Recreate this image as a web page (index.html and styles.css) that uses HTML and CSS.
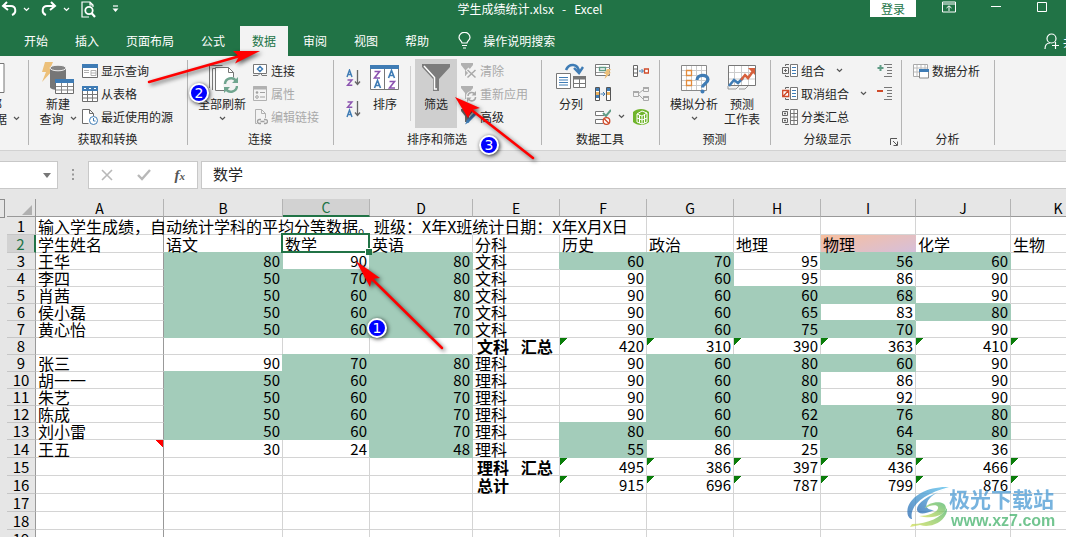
FILE: index.html
```html
<!DOCTYPE html>
<html lang="zh-CN">
<head>
<meta charset="utf-8">
<meta name="viewport" content="width=device-width, initial-scale=1">
<title>学生成绩统计.xlsx - Excel</title>
<link rel="stylesheet" href="styles.css">
</head>
<body>
<svg class="defs" aria-hidden="true">
  <symbol id="chev" viewBox="0 0 7 5"><path d="M1 1l2.500 2.500L6 1" fill="none" stroke="currentColor" stroke-width="1.200"/></symbol>
</svg>

<header class="top">
  <div class="titlebar">
    <div class="quick">
      <button class="qbtn" aria-label="撤消"><svg width="16" height="16" viewBox="0 0 16 16"><path d="M6 1L2 5l5 4M2 5h8c5 0 6 7 1 9" fill="none" stroke="#fff" stroke-width="2"/></svg></button>
      <button class="qbtn" aria-label="撤消列表"><svg width="7" height="5"><use href="#chev"/></svg></button>
      <button class="qbtn redo" aria-label="恢复"><svg width="16" height="16" viewBox="0 0 16 16"><path d="M10 1l4 4-5 4M14 5H6C1 5 0 12 5 14" fill="none" stroke="#fff" stroke-width="2"/></svg></button>
      <button class="qbtn" aria-label="恢复列表"><svg width="7" height="5"><use href="#chev"/></svg></button>
      <button class="qbtn preview" aria-label="打印预览"><svg width="16" height="17" viewBox="0 0 16 17"><path d="M12 6V4L9 1H1v15h7M9 1v3h3" fill="none" stroke="#fff" stroke-width="1.200"/><circle cx="8" cy="9.500" r="3.700" fill="none" stroke="#fff" stroke-width="1.800"/><path d="M10.500 12l3.500 4" stroke="#fff" stroke-width="2.200"/></svg></button>
      <button class="qbtn" aria-label="自定义快速访问工具栏"><svg width="7" height="8" viewBox="0 0 7 8"><path d="M1 1h5" stroke="#fff" stroke-width="1.200"/><path d="M0.500 3.500h6l-3 3.500z" fill="#fff"/></svg></button>
    </div>
    <h1 class="title">学生成绩统计.xlsx&nbsp;&nbsp; -&nbsp;&nbsp; Excel</h1>
    <div class="winctl">
      <button class="login">登录</button>
      <button class="wbtn" aria-label="功能区显示选项"><svg width="14" height="12" viewBox="0 0 14 12"><path d="M.5 1h13v10H.5zM.5 3h13M7 10V5M4.500 7L7 4.800 9.500 7" fill="none" stroke="#fff"/></svg></button>
      <button class="wbtn" aria-label="最小化"><svg width="11" height="12"><path d="M0 5.500h10" stroke="#fff"/></svg></button>
      <button class="wbtn" aria-label="最大化"><svg width="11" height="12"><path d="M.5 1.500h9v9h-9z" fill="none" stroke="#fff"/></svg></button>
    </div>
  </div>
  <nav class="tabs">
    <button class="tab">开始</button><button class="tab">插入</button><button class="tab">页面布局</button><button class="tab">公式</button><button class="tab active">数据</button><button class="tab">审阅</button><button class="tab">视图</button><button class="tab">帮助</button>
    <button class="tell"><svg width="13" height="17" viewBox="0 0 13 17"><path d="M4 11C4 9 1 8 1 5.500a5.300 5 0 0 1 11 0C12 8 9 9 9 11zM4 13.500h5M5 16h3" fill="none" stroke="#fff" stroke-width="1.200"/></svg>操作说明搜索</button>
    <button class="share"><svg width="16" height="17" viewBox="0 0 16 17"><circle cx="7.500" cy="5.500" r="4.500" fill="none" stroke="#fff" stroke-width="1.200"/><path d="M1 16c0-4 2-6 5-6M8 12.500h7M11.500 9v7" fill="none" stroke="#fff" stroke-width="1.200"/></svg>共享</button>
  </nav>
</header>

<section class="ribbon">
  <div class="group g-ext">
    <div class="body">
      <button class="big"><svg width="32" height="32" viewBox="0 0 32 32"><path d="M2 1.500h29v29H2z" fill="#fff" stroke="#777"/></svg><span>获取外部</span><span>数据<svg class="dd" width="7" height="5"><use href="#chev"/></svg></span></button>
    </div>
  </div>

  <div class="group g-get">
    <div class="body">
      <button class="big">
        <svg width="34" height="32" viewBox="0 0 34 32"><path d="M4 0h8L9 7h4L1 20l4-10H1z" fill="#ecc07a"/><path d="M9 6v19c0 4 16 4 16 0V6z" fill="#767676"/><ellipse cx="17" cy="6" rx="8" ry="2.800" fill="#858585" stroke="#f3f3f3"/><path d="M14.500 17.500h18v14h-18z" fill="#fff" stroke="#6d6d6d"/><path d="M14 17h19v4H14z" fill="#3f7cb5"/><path d="M20.500 21v10M26.500 21v10M15 24.500h17M15 28h17" stroke="#858585"/></svg>
        <span>新建</span><span>查询<svg class="dd" width="7" height="5"><use href="#chev"/></svg></span>
      </button>
      <div class="stack">
        <button class="small"><svg width="16" height="16" viewBox="0 0 16 16"><path d="M.5 1.500h15v13H.5z" fill="#fff" stroke="#6d6d6d"/><path d="M0 1h16v4H0z" fill="#3f7cb5"/><path d="M2 7.500h5M2 9.500h5M9 7.500h5v5H9zM9 10h5" stroke="#b1b1b1" fill="none"/></svg>显示查询</button>
        <button class="small"><svg width="16" height="16" viewBox="0 0 16 16"><path d="M.5.5h15v15H.5z" fill="#fff" stroke="#6d6d6d"/><path d="M0 0h16v5H0z" fill="#3f7cb5"/><path d="M2 2.500h2M7 2.500h2M12 2.500h2" stroke="#fff"/><path d="M5.500 5v10M10.500 5v10M1 8.500h14M1 12h14" stroke="#777"/></svg>从表格</button>
        <button class="small"><svg width="16" height="16" viewBox="0 0 16 16"><path d="M6.500 14.500h-6V.5h7l4 4V7M7.500.5v4h4" fill="#fff" stroke="#6d6d6d"/><circle cx="11.500" cy="11.500" r="4" fill="#fff" stroke="#3f7cb5"/><path d="M11.500 9v3h2" fill="none" stroke="#3f7cb5"/></svg>最近使用的源</button>
      </div>
    </div>
    <div class="label">获取和转换</div>
  </div>

  <div class="group g-conn">
    <div class="body">
      <button class="big">
        <svg width="32" height="32" viewBox="0 0 32 32"><path d="M3.500 26V3.500h13M6.500 28V6.500h12" fill="none" stroke="#777"/><path d="M9.500 5.500h13l5 5v18h-18z" fill="#fff" stroke="#777"/><path d="M22.500 5.500v5h5" fill="none" stroke="#777"/><circle cx="25" cy="23" r="8" fill="#f3f3f3"/><path d="M19 22a6 6 0 0 1 11-3M31 24a6 6 0 0 1-11 3" fill="none" stroke="#70a58f" stroke-width="2.400"/><path d="M32 15v6h-6zM18 31v-6h6z" fill="#70a58f"/></svg>
        <span>全部刷新</span><svg class="below" width="7" height="5"><use href="#chev"/></svg>
      </button>
      <div class="stack">
        <button class="small"><svg width="16" height="16" viewBox="0 0 16 16"><path d="M1.500 1.500h13v9h-13z" fill="#fff" stroke="#777"/><path d="M8 3.500L10.500 6 8 8.500 5.500 6z" fill="none" stroke="#3f7cb5" stroke-width="1.500"/><path d="M1 12.500h5l2-2M15 12.500h-5l-1-2" fill="none" stroke="#777"/></svg>连接</button>
        <button class="small" disabled><svg width="16" height="16" viewBox="0 0 16 16"><path d="M1.500.5h13v14h-13z" fill="none" stroke="#b1b1b1"/><path d="M1 2h14" stroke="#b1b1b1" stroke-width="3"/><path d="M8 6.500h5M8 11h5" stroke="#a1a1a1"/><circle cx="5" cy="6.500" r="1.300" fill="#a1a1a1"/><circle cx="5" cy="11" r="1.300" fill="none" stroke="#a1a1a1"/></svg>属性</button>
        <button class="small" disabled><svg width="16" height="16" viewBox="0 0 16 16"><path d="M5 14.500H3.500V.5h6l4 4V9M9.500.5v4h4" fill="none" stroke="#b1b1b1"/><path d="M9 10.500H7.500a2 2 0 0 0 0 4H9M12 10.500h1.500a2 2 0 0 1 0 4H12M8.500 12.500h4" fill="none" stroke="#a1a1a1" stroke-width="1.300"/></svg>编辑链接</button>
      </div>
    </div>
    <div class="label">连接</div>
  </div>

  <div class="group g-sort">
    <div class="body">
      <div class="sorts">
        <button class="sortbtn" aria-label="升序"><svg width="16" height="18" viewBox="0 0 16 18"><path d="M1 8l2.500-7L6 8M2 5.500h3" fill="none" stroke="#3f7cb5" stroke-width="1.400"/><path d="M1.500 11H6l-4.500 5.300H6.300" fill="none" stroke="#8c54b0" stroke-width="1.400"/><path d="M11.500 1v14M9 12.500l2.500 3 2.500-3" fill="none" stroke="#666" stroke-width="1.300"/></svg></button>
        <button class="sortbtn" aria-label="降序"><svg width="16" height="18" viewBox="0 0 16 18"><path d="M1.500 2H6L1.500 7.300H6.300" fill="none" stroke="#8c54b0" stroke-width="1.400"/><path d="M1 17l2.500-7L6 17M2 14.500h3" fill="none" stroke="#3f7cb5" stroke-width="1.400"/><path d="M11.500 1v14M9 12.500l2.500 3 2.500-3" fill="none" stroke="#666" stroke-width="1.300"/></svg></button>
      </div>
      <button class="big sort">
        <svg width="30" height="32" viewBox="0 0 30 32"><path d="M.5 3.500h28v24H.5z" fill="#fff" stroke="#777"/><path d="M0 3h29v4H0z" fill="#3f7cb5"/><path d="M14.500 7v20" stroke="#777"/><path d="M4.500 9.500h5l-5 6.500h5.500M19.500 19.500h5l-5 6.500h5.500" fill="none" stroke="#8c54b0" stroke-width="1.600"/><path d="M4.500 26l3-7.500 3 7.500M5.500 23.500h4M18.500 16l3-7.500 3 7.500M19.500 13.500h4" fill="none" stroke="#3f7cb5" stroke-width="1.600"/></svg>
        <span>排序</span>
      </button>
      <div class="vline"></div>
      <button class="big pressed">
        <svg width="28" height="32" viewBox="0 0 28 32"><path d="M0 2h28v3L17 17v12h-6V17L0 5z" fill="#7c7c7c"/><path d="M2 4l10.500 11.500V27H15" fill="none" stroke="#fff" stroke-width="1.500"/></svg>
        <span>筛选</span>
      </button>
      <div class="stack">
        <button class="small" disabled><svg width="16" height="16" viewBox="0 0 16 16"><path d="M0 0h12v2L8 7v6H4V7L0 2z" fill="#b1b1b1"/><path d="M6 6l8 8M14 6l-8 8" stroke="#f3f3f3" stroke-width="4"/><path d="M6.500 7l8 7.500M14.500 7l-8 7.500" stroke="#a9a9a9" stroke-width="1.500"/></svg>清除</button>
        <button class="small" disabled><svg width="16" height="16" viewBox="0 0 16 16"><path d="M0 0h12v2L8 7v6H4V7L0 2z" fill="#b1b1b1"/><circle cx="10.500" cy="10.500" r="5.500" fill="#f3f3f3"/><path d="M7 10a3.700 3.700 0 0 1 7-1.500M14.500 11a3.700 3.700 0 0 1-7 1.800" fill="none" stroke="#a9a9a9" stroke-width="1.500"/><path d="M15 5v4.500h-4.500zM6 16v-4.500h4.500z" fill="#a9a9a9"/></svg>重新应用</button>
        <button class="small"><svg width="16" height="16" viewBox="0 0 16 16"><path d="M0 0h12v2L8 7v6H4V7L0 2z" fill="#666"/><path d="M15 4l-9 9" stroke="#3f7cb5" stroke-width="3"/><path d="M6.500 10.500L4 15.500l4.500-2.500z" fill="#3f7cb5"/></svg>高级</button>
      </div>
    </div>
    <div class="label">排序和筛选</div>
  </div>

  <div class="group g-tools">
    <div class="body">
      <button class="big">
        <svg width="32" height="32" viewBox="0 0 32 32"><path d="M11 8c3-7 12-7 13 2" fill="none" stroke="#3f7cb5" stroke-width="2.600"/><path d="M19 6l5 5 4-6" fill="none" stroke="#3f7cb5" stroke-width="2.400"/><path d="M1.500 11.500h14v15h-14z" fill="#fff" stroke="#777"/><path d="M4 15.500h9M4 18h9M4 20.500h9M4 23h9" stroke="#3f7cb5"/><path d="M18.500 14.500h12v11h-12z" fill="#fff" stroke="#777"/><path d="M18 14h13v3.500H18z" fill="#777"/><path d="M24.500 17v8M19 21.500h11" stroke="#777"/></svg>
        <span>分列</span>
      </button>
      <div class="toolgrid">
        <button class="ic" aria-label="快速填充"><svg width="16" height="16" viewBox="0 0 16 16"><path d="M.5 1.500h14v11H.5z" fill="#fff" stroke="#777"/><path d="M1 4.500h14M1 9.500h14" stroke="#999"/><path d="M4.500 4.500h6v3h-6z" fill="#fff" stroke="#5f9c85" stroke-width="1.300"/><path d="M12 6h4l-2 3.500h2L9.500 16l1.500-5H9z" fill="#ecc07a"/></svg></button>
        <button class="ic" aria-label="合并计算"><svg width="16" height="16" viewBox="0 0 16 16"><path d="M.5 2.500h4v11h-4zM.5 6h4M.5 10h4" fill="#fff" stroke="#666"/><path d="M6 8h4M8.500 6l2 2-2 2" fill="none" stroke="#3f7cb5"/><path d="M11.500 6h4v4h-4z" fill="#fff" stroke="#cf4b2a" stroke-width="1.300"/></svg></button>
        <button class="ic" aria-label="删除重复值"><svg width="16" height="16" viewBox="0 0 16 16"><path d="M.5 1.500h4v13h-4zM11.500 1.500h4v13h-4z" fill="#fff" stroke="#555"/><path d="M1 2h3v3H1zM1 9h3v3H1zM12 2h3v3h-3z" fill="#3f7cb5"/><path d="M1 6h3v3H1zM12 6h3v3h-3z" fill="#ecb25e"/><path d="M5.500 8h4M8 6l2 2-2 2" fill="none" stroke="#3f7cb5"/></svg></button>
        <button class="ic" aria-label="关系" disabled><svg width="16" height="16" viewBox="0 0 16 16"><path d="M5 8l5-4M5 8l5 5" stroke="#aaa"/><path d="M.5 5.500h5v5h-5zM10.500 1.500h5v4h-5zM10.500 10.500h5v4h-5z" fill="#f3f3f3" stroke="#aaa"/><path d="M0 6h6M10 2h6M10 11h6" stroke="#aaa" stroke-width="2"/></svg></button>
        <button class="ic wide" aria-label="数据验证"><svg width="16" height="16" viewBox="0 0 16 16"><path d="M9 2.500H.5v4H9M8 10.500H.5v4H8" fill="#fff" stroke="#777"/><path d="M8 4l3 3 5-6" fill="none" stroke="#5f9c85" stroke-width="2"/><circle cx="11.500" cy="12" r="3.300" fill="#fff" stroke="#cf4b2a" stroke-width="1.300"/><path d="M9.200 9.700l4.600 4.600" stroke="#cf4b2a" stroke-width="1.300"/></svg><svg width="7" height="5"><use href="#chev"/></svg></button>
        <button class="ic" aria-label="管理数据模型"><svg width="16" height="16" viewBox="0 0 16 16"><path d="M0 3C4-1 12-1 16 3v10c-4 4-12 4-16 0z" fill="#70b52b"/><path d="M4 5l5-3 5 2v9l-5 2-5-2zM4 5l5 2 5-3M9 7v8M6.500 6v8M11.500 5.500V14M4 9l5 2 5-2" fill="none" stroke="#fff"/></svg></button>
      </div>
    </div>
    <div class="label">数据工具</div>
  </div>

  <div class="group g-fore">
    <div class="body">
      <button class="big">
        <svg width="32" height="32" viewBox="0 0 32 32"><path d="M3.500 3.500h25v25h-25z" fill="#fff" stroke="#888"/><path d="M8.500 4v24M13.500 4v24M18.500 4v24M23.500 4v24M4 8.500h24M4 13.500h24M4 18.500h24M4 23.500h24" stroke="#ccc"/><path d="M8.500 8.500h5v5h-5zM8.500 18.500h5v5h-5z" fill="#fff" stroke="#e38b3b" stroke-width="1.300"/><path d="M19 18c0-6 11-6 11-.5 0 4-5.500 4-5.500 8" fill="none" stroke="#3f7cb5" stroke-width="3.200"/><circle cx="24.500" cy="29.500" r="2" fill="#3f7cb5"/></svg>
        <span>模拟分析</span><svg class="below" width="7" height="5"><use href="#chev"/></svg>
      </button>
      <button class="big">
        <svg width="32" height="32" viewBox="0 0 32 32"><path d="M2.500 3.500h27v20h-27z" fill="#fff" stroke="#777"/><path d="M8.500 4v19M15.500 4v19M22.500 4v19M3 10.500h26M3 17h26" stroke="#ccc"/><path d="M3 24l5-6 4 3 5-5" fill="none" stroke="#3f7cb5" stroke-width="2.500"/><path d="M15 18l4-5 3 3 6-8" fill="none" stroke="#d6603c" stroke-width="2.500"/><path d="M22 6h7v7z" fill="#d6603c"/><path d="M2 24v3h8l3-3M13 27h6l3-3" fill="none" stroke="#999"/></svg>
        <span>预测</span><span>工作表</span>
      </button>
    </div>
    <div class="label">预测</div>
  </div>

  <div class="group g-outline">
    <div class="body">
      <div class="stack">
        <button class="small"><svg width="16" height="16" viewBox="0 0 16 16"><path d="M8.500 1.500h7v12h-7z" fill="#fff" stroke="#777"/><path d="M10 4.500h4M10 7.500h4M10 10.500h4" stroke="#3f7cb5"/><path d="M7 1.500H3.500V3M7 13.500H3.500V12M.5 4.500h6v6h-6zM2 7.500h3M3.500 6v3" fill="none" stroke="#666"/></svg>组合<svg class="dd far" width="7" height="5"><use href="#chev"/></svg></button>
        <button class="small"><svg width="16" height="16" viewBox="0 0 16 16"><path d="M8.500 1.500h7v12h-7z" fill="#fff" stroke="#777"/><path d="M10 4.500h4M10 7.500h4M10 10.500h4" stroke="#3f7cb5"/><path d="M7 1.500H3.500V3M7 13.500H3.500V12" fill="none" stroke="#666"/><path d="M.7 4.500h6v6h-6zM1 10.500l5.500-6" fill="#fff" stroke="#cf4b2a" stroke-width="1.300"/></svg>取消组合<svg class="dd far" width="7" height="5"><use href="#chev"/></svg></button>
        <button class="small"><svg width="16" height="16" viewBox="0 0 16 16"><path d="M8.500.5h7v15h-7zM8 4.500h8M8 8h8M8 11.500h8M12 0v16" fill="#fff" stroke="#777"/><path d="M7 .5H3M.5 2.500h5v4h-5zM2 4.500h2M3 3.500v2M.5 9.500h5v4h-5zM2 11.500h2M3 10.500v2M3 15.500h4" fill="none" stroke="#666"/></svg>分类汇总</button>
      </div>
      <div class="detail">
        <button class="ic" aria-label="显示明细数据"><svg width="16" height="16" viewBox="0 0 16 16"><path d="M3.500 2v6M.5 5h6" stroke="#5f9c85" stroke-width="2"/><path d="M7 1.500h8M10 4.500h5M10 7.500h5M10 10.500h5M7 13.500h8" stroke="#777"/></svg></button>
        <button class="ic" aria-label="隐藏明细数据"><svg width="16" height="16" viewBox="0 0 16 16"><path d="M0 5h6" stroke="#cf4b2a" stroke-width="2"/><path d="M7 1.500h8M10 4.500h5M10 7.500h5M10 10.500h5M7 13.500h8" stroke="#777"/></svg></button>
      </div>
    </div>
    <div class="label">分级显示</div>
    <button class="launch" aria-label="分级显示设置"><svg width="8" height="8" viewBox="0 0 8 8"><path d="M.5 7V.5H7M3 3l4 4M7.500 3.500v4h-4" fill="none" stroke="#555"/></svg></button>
  </div>

  <div class="group g-an">
    <div class="body">
      <div class="stack">
        <button class="small"><svg width="16" height="16" viewBox="0 0 16 16"><path d="M.5 1.500h14v12H.5z" fill="#fff" stroke="#aaa"/><path d="M4 2v11M8 2v11M12 2v11M1 5h13M1 9h13" stroke="#bbb"/><path d="M6.500 6.500h9v8.500h-9z" fill="#fff" stroke="#888"/><path d="M6 6h10v3H6z" fill="#3f7cb5"/></svg>数据分析</button>
      </div>
    </div>
    <div class="label">分析</div>
  </div>
</section>

<section class="formulabar">
  <div class="namebox"><input type="text" aria-label="名称框"><button aria-label="名称列表"><svg width="8" height="5"><path d="M0 0h8L4 5z" fill="#777"/></svg></button></div>
  <svg class="dots" width="3" height="12"><path d="M0 1h2M0 5.500h2M0 10h2" stroke="#999" stroke-width="2"/></svg>
  <div class="fxbox">
    <button aria-label="取消"><svg width="12" height="12"><path d="M1 1l10 10M11 1L1 11" stroke="#b8b8b8" stroke-width="1.600"/></svg></button>
    <button aria-label="输入"><svg width="14" height="12"><path d="M1 6l4 4 8-9" fill="none" stroke="#b8b8b8" stroke-width="2.400"/></svg></button>
    <button class="fx" aria-label="插入函数">f<small>x</small></button>
  </div>
  <input class="formula" type="text" value="数学" aria-label="编辑栏">
</section>

<main class="sheet">
  <div class="gutter"></div>
  <table class="grid">
    <colgroup><col class="w-head"><col class="w-a"><col class="w-b"><col class="w-m"><col class="w-d"><col class="w-m"><col class="w-m"><col class="w-m"><col class="w-m"><col class="w-l"><col class="w-l"><col class="w-l"></colgroup>
    <thead><tr><th class="corner"><svg width="10" height="10"><path d="M10 0v10H0z" fill="#b0b0b0"/></svg></th><th>A</th><th>B</th><th class="on">C</th><th>D</th><th>E</th><th>F</th><th>G</th><th>H</th><th>I</th><th>J</th><th>K</th></tr></thead>
    <tbody>
      <tr class="tall spill"><th>1</th><td class="a">输入学生成绩&#xFF0C;自动统计学科的平均分等数据。班级&#xFF1A;X年X班统计日期&#xFF1A;X年X月X日</td><td></td><td></td><td></td><td></td><td></td><td></td><td></td><td></td><td></td><td></td></tr>
      <tr class="tall"><th class="on">2</th><td class="a">学生姓名</td><td>语文</td><td class="sel">数学</td><td>英语</td><td>分科</td><td>历史</td><td>政治</td><td>地理</td><td class="warm">物理</td><td>化学</td><td>生物</td></tr>
      <tr><th>3</th><td class="a">王华</td><td class="n g">80</td><td class="n">90</td><td class="n g">80</td><td>文科</td><td class="n g">60</td><td class="n g">70</td><td class="n">95</td><td class="n g">56</td><td class="n g">60</td><td></td></tr>
      <tr><th>4</th><td class="a">李四</td><td class="n g">50</td><td class="n g">70</td><td class="n g">80</td><td>文科</td><td class="n">90</td><td class="n g">60</td><td class="n">95</td><td class="n">86</td><td class="n">90</td><td></td></tr>
      <tr><th>5</th><td class="a">肖茜</td><td class="n g">50</td><td class="n g">60</td><td class="n g">80</td><td>文科</td><td class="n">90</td><td class="n g">60</td><td class="n g">60</td><td class="n g">68</td><td class="n">90</td><td></td></tr>
      <tr><th>6</th><td class="a">侯小磊</td><td class="n g">50</td><td class="n g">60</td><td class="n g">70</td><td>文科</td><td class="n">90</td><td class="n g">60</td><td class="n g">65</td><td class="n">83</td><td class="n g">80</td><td></td></tr>
      <tr><th>7</th><td class="a">黄心怡</td><td class="n g">50</td><td class="n g">60</td><td class="n g">70</td><td>文科</td><td class="n">90</td><td class="n g">60</td><td class="n g">75</td><td class="n g">70</td><td class="n">90</td><td></td></tr>
      <tr><th>8</th><td class="a"></td><td></td><td></td><td></td><td class="b">文科&ensp; 汇总</td><td class="n f">420</td><td class="n f">310</td><td class="n f">390</td><td class="n f">363</td><td class="n f">410</td><td class="f"></td></tr>
      <tr><th>9</th><td class="a">张三</td><td class="n">90</td><td class="n g">70</td><td class="n g">80</td><td>理科</td><td class="n">90</td><td class="n g">60</td><td class="n g">80</td><td class="n g">60</td><td class="n">90</td><td></td></tr>
      <tr><th>10</th><td class="a">胡一一</td><td class="n g">50</td><td class="n g">60</td><td class="n g">80</td><td>理科</td><td class="n">90</td><td class="n g">60</td><td class="n g">80</td><td class="n">86</td><td class="n">90</td><td></td></tr>
      <tr><th>11</th><td class="a">朱艺</td><td class="n g">50</td><td class="n g">60</td><td class="n g">70</td><td>理科</td><td class="n">90</td><td class="n g">60</td><td class="n g">80</td><td class="n">92</td><td class="n">90</td><td></td></tr>
      <tr><th>12</th><td class="a">陈成</td><td class="n g">50</td><td class="n g">60</td><td class="n g">70</td><td>理科</td><td class="n">90</td><td class="n g">60</td><td class="n g">62</td><td class="n g">76</td><td class="n g">80</td><td></td></tr>
      <tr><th>13</th><td class="a">刘小雷</td><td class="n g">50</td><td class="n g">60</td><td class="n g">70</td><td>理科</td><td class="n g">80</td><td class="n g">60</td><td class="n g">70</td><td class="n g">64</td><td class="n g">80</td><td></td></tr>
      <tr class="tall"><th>14</th><td class="a note">王五</td><td class="n">30</td><td class="n">24</td><td class="n g">48</td><td>理科</td><td class="n g">55</td><td class="n">86</td><td class="n">25</td><td class="n g">58</td><td class="n">36</td><td></td></tr>
      <tr class="tall"><th>15</th><td class="a"></td><td></td><td></td><td></td><td class="b">理科&ensp; 汇总</td><td class="n f">495</td><td class="n f">386</td><td class="n f">397</td><td class="n f">436</td><td class="n f">466</td><td class="f"></td></tr>
      <tr class="tall"><th>16</th><td class="a"></td><td></td><td></td><td></td><td class="b">总计</td><td class="n f">915</td><td class="n f">696</td><td class="n f">787</td><td class="n f">799</td><td class="n f">876</td><td class="f"></td></tr>
      <tr class="tall"><th>17</th><td class="a"></td><td></td><td></td><td></td><td></td><td></td><td></td><td></td><td></td><td></td><td></td></tr>
      <tr class="tall"><th>18</th><td class="a"></td><td></td><td></td><td></td><td></td><td></td><td></td><td></td><td></td><td></td><td></td></tr>
      <tr class="tall"><th>19</th><td class="a"></td><td></td><td></td><td></td><td></td><td></td><td></td><td></td><td></td><td></td><td></td></tr>
    </tbody>
  </table>
</main>

<svg class="marks" width="1066" height="537" viewBox="0 0 1066 537">
  <defs>
    <linearGradient id="swB" x1="0" y1="1" x2="1" y2="0"><stop offset="0" stop-color="#2466b0"/><stop offset="1" stop-color="#58c0ec"/></linearGradient>
    <linearGradient id="swG" x1="0" y1="1" x2="1" y2="0"><stop offset="0" stop-color="#d5df55"/><stop offset="1" stop-color="#4bb56a"/></linearGradient>
  </defs>
  <g class="arrows">
    <path d="M149 82l91-26" stroke="#f00" stroke-width="2.500" stroke-linecap="round"/><path d="M260 51l-27 0 6 5.500-4 7z"/>
    <path d="M442 348l-70-69" stroke="#f00" stroke-width="2.500" stroke-linecap="round"/><path d="M356 261l24 17-8 1-2 8z"/>
    <path d="M533 158l-64-50" stroke="#f00" stroke-width="2.500" stroke-linecap="round"/><path d="M455 97l25 11-8 2-4 8z"/>
  </g>
  <g class="badges">
    <circle cx="199" cy="93" r="9"/><circle cx="489" cy="145" r="9"/><circle cx="377" cy="328" r="9"/>
  </g>
  <g class="nums"><text x="199" y="98">2</text><text x="489" y="150">3</text><text x="377" y="333">1</text></g>
  <g class="brand">
    <path d="M949 487c-20-1-37 8-41 20-2 7 1 12 4 12-3-12 10-25 37-32z" fill="url(#swB)"/>
    <path d="M946 489c-20 7-30 15-29 21 1 5 9 4 17 0-5 0-9-2-7-7 2-6 9-11 19-14z" fill="url(#swB)"/>
    <path d="M919 516c9 0 20-4 19-9-1-3-8-2-13 1 3-6 20-9 21 0 0 6-12 12-27 8z" fill="url(#swG)"/>
    <path d="M912 524c16 0 30-7 35-16 1 12-15 21-27 17l-10 2z" fill="url(#swG)"/>
    <text class="cn" x="949" y="507">极光下载站</text><text class="url" x="951" y="526">www.xz7.com</text>
  </g>
</svg>
</body>
</html>
```

FILE: styles.css
```css
* { box-sizing: border-box; }
html, body { height: 100%; }
body {
  margin: 0;
  position: relative;
  display: flex;
  flex-direction: column;
  overflow: hidden;
  background: #e6e6e6;
  color: #262626;
  font: 12px/15px "Noto Sans CJK SC", sans-serif;
}
button { border: 0; padding: 0; background: none; color: inherit; font: inherit; white-space: nowrap; }
input { border: 0; padding: 0; min-width: 0; font: inherit; color: inherit; background: none; }
svg { display: block; flex: none; }
.defs { position: absolute; width: 0; height: 0; }

/* title bar and tabs */
.top { background: #217346; color: #fff; }
.titlebar { display: grid; grid-template-columns: 1fr auto 1fr; height: 26px; align-items: start; }
.quick { display: flex; align-items: center; height: 18px; padding-left: 1px; gap: 6px; }
.preview { margin: 0 9px 0 5px; }
.redo { margin-left: 5px; }
.title { margin: 0; padding-right: 6px; font-size: 12px; font-weight: 400; line-height: 17px; }
.winctl { display: flex; justify-content: flex-end; align-items: flex-start; padding-right: 18px; }
.wbtn { padding-top: 1px; margin-left: 35px; }
.login + .wbtn { margin-left: 26px; }
.login { height: 17px; width: 46px; background: #fff; color: #217346; line-height: 14px; }
.tabs { display: flex; height: 30px; padding-left: 12px; gap: 3px; overflow: hidden; }
.tab { padding: 0 12px; line-height: 26px; }
.tab.active { background: #f3f3f3; color: #217346; }
.tell { display: flex; align-items: center; gap: 12px; margin-left: 14px; height: 28px; }
.share { display: flex; align-items: center; gap: 3px; margin-left: auto; width: 22px; height: 30px; }

/* ribbon */
.ribbon { display: flex; height: 95px; padding-top: 3px; background: #f3f3f3; border-bottom: 1px solid #d2d2d2; }
.group { position: relative; flex: none; display: flex; flex-direction: column; }
.group::after { content: ""; position: absolute; right: 0; top: 1px; bottom: 5px; width: 1px; background: #b4b4b4; }
.body { display: flex; height: 69px; }
.label { text-align: center; padding: 3px 2px 0 0; }
.big { display: flex; flex-direction: column; align-items: center; padding-top: 3px; }
.big > svg:first-child { margin-bottom: 2px; }
.big span { display: flex; align-items: center; line-height: 15px; }
.dd { margin-left: 6px; color: #555; }
.dd.far { margin-left: 8px; }
.below { margin-top: 5px; color: #555; }
.stack { display: flex; flex-direction: column; }
.small { display: flex; align-items: center; gap: 3px; height: 23px; }
.small:disabled { color: #a9a9a9; }
.ic { display: flex; align-items: center; height: 23px; }
.g-ext { width: 29px; }
.g-ext .body { justify-content: flex-end; padding-right: 9px; overflow: hidden; }
.g-ext .big { align-items: flex-end; }
.g-ext .big > svg:first-child { margin-right: 15px; }
.g-ext .big > span:nth-child(2) { margin-right: 18px; }
.g-get { width: 159px; }
.g-get .body { padding-left: 11px; gap: 6px; }
.g-get .big { width: 36px; }
.g-conn { width: 146px; }
.g-conn .body { padding-left: 10px; gap: 6px; }
.g-sort { width: 208px; }
.g-sort .body { padding-left: 12px; }
.sorts { display: flex; flex-direction: column; gap: 13px; padding-top: 10px; }
.big.sort { margin: 0 10px 0 8px; }
.vline { width: 1px; margin: 7px 4px 7px 0; background: #d0d0d0; }
.big.pressed { width: 42px; margin-right: 4px; background: #cfcfcf; }
.g-tools { width: 118px; }
.g-tools .body { padding-left: 13px; gap: 8px; }
.toolgrid { display: grid; grid-template-columns: 38px 16px; }
.wide { gap: 7px; color: #555; }
.g-fore { width: 111px; }
.g-fore .body { padding-left: 10px; gap: 6px; }
.g-outline { width: 131px; }
.g-outline .body { padding: 0 9px 0 11px; justify-content: space-between; }
.g-outline .label { padding-right: 18px; }
.launch { position: absolute; right: 4px; bottom: 4px; }
.g-an { width: 93px; }
.g-an .body { padding-left: 11px; }

/* formula bar */
.formulabar { display: flex; height: 48px; padding: 10px 0 10px; }
.namebox, .fxbox, .formula { background: #fff; border: 1px solid #c8c8c8; }
.namebox { width: 58px; display: flex; border-left: 0; }
.namebox input { flex: 1; }
.namebox button { padding-right: 6px; }
.dots { margin: 8px 13px 0 14px; }
.fxbox { width: 110px; display: flex; align-items: center; justify-content: space-between; padding: 0 12px 0 12px; }
.fx { font: italic bold 15px/20px "Liberation Serif", serif; color: #555; }
.fx small { font-size: 11px; }
.formula { flex: 1; margin-left: 3px; padding: 0 11px 3px; border-right: 0; font-size: 15px; }

/* worksheet */
.sheet { flex: 1; display: flex; min-height: 0; overflow: hidden; }
.gutter { flex: none; width: 7px; }
.gutter::before { content: ""; display: block; width: 4px; height: 17px; border: 1px solid #8c8c8c; border-left: 0; }
.grid { flex: none; width: 1099px; table-layout: fixed; border-spacing: 0; background: #fff; color: #000; font-size: 15px; line-height: 16px; }
.w-head { width: 29px; }
.w-a { width: 128px; }
.w-b { width: 119px; }
.w-m { width: 87px; }
.w-d { width: 103px; }
.w-l { width: 95px; }
.grid tr { height: 17px; }
.grid .tall, .grid thead tr { height: 18px; }
.grid th { padding: 0; font-weight: 400; background: #e6e6e6; border-right: 1px solid #b4b4b4; border-bottom: 1px solid #c6c6c6; }
.grid thead th { border-bottom-color: #999; font-size: 14px; }
.grid tbody th, .grid th.corner { border-right-color: #999; }
.grid th.on { background: #d2d2d2; color: #217346; }
.grid thead th.on { border-bottom: 2px solid #217346; line-height: 15px; }
.grid tbody th.on { border-right: 2px solid #217346; }
.corner svg { margin: 4px 0 0 15px; }
.grid td { padding: 0 2px; border-right: 1px solid #d4d4d4; border-bottom: 1px solid #d4d4d4; font-size: 16px; white-space: nowrap; }
.grid td.n { font-size: 15px; text-align: right; }
.grid td.a { position: relative; z-index: 1; border-right-color: #999; }
.grid .spill td:nth-child(-n+6):not(.a) { border-right-color: transparent; }
.grid td.g { background: #a3ccba; border-color: #a3ccba; box-shadow: -1px -1px 0 #a3ccba; }
.grid td.b { font-weight: 700; padding-left: 4px; }
.grid td.warm { background: linear-gradient(165deg, #f8bf9e, #d5bfdc); border-color: transparent; background-origin: border-box; }
.grid td.f { background: linear-gradient(135deg, #0a7d0a 5px, transparent 5px) no-repeat; }
.grid td.note { background: linear-gradient(225deg, #f00 5px, transparent 5px) no-repeat; }
.grid td.sel { position: relative; z-index: 2; }
.sel::before { content: ""; position: absolute; inset: -2px -1px -1px -2px; border: 2px solid #217346; }
.sel::after { content: ""; position: absolute; right: -3px; bottom: -3px; width: 6px; height: 6px; background: #217346; border: 1px solid #fff; border-right: 0; border-bottom: 0; }

/* call-outs lying over the window */
.marks { position: absolute; left: 0; top: 0; z-index: 5; pointer-events: none; }
.arrows { fill: #f00; filter: drop-shadow(2px 2px 2px rgba(0, 0, 0, .6)); }
.badges { fill: #00f; stroke: #fff; stroke-width: 2; filter: drop-shadow(1px 1px 2px rgba(0, 0, 0, .8)); }
.nums { fill: #fff; font: 14px "DejaVu Sans", sans-serif; text-anchor: middle; }
.brand { opacity: .75; }
.cn { fill: #4a9ad4; font: bold 21px "Noto Sans CJK SC", sans-serif; }
.url { fill: #44b26b; font: bold 16px "Liberation Sans", sans-serif; }
```
